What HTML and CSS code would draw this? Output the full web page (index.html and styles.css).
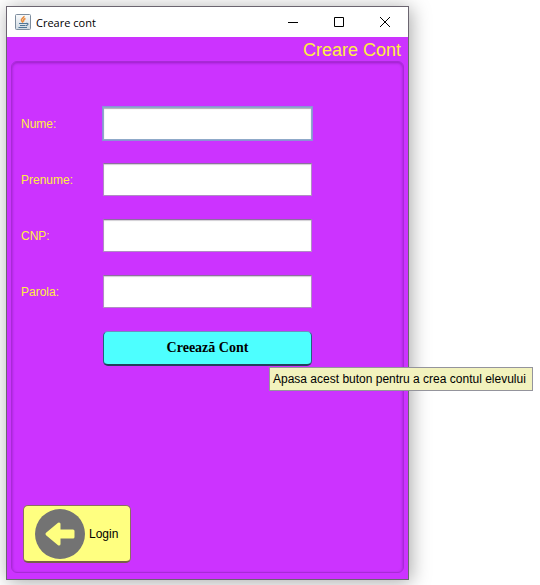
FILE: index.html
```html
<!DOCTYPE html>
<html lang="ro">
<head>
<meta charset="utf-8">
<title>Creare cont</title>
<link rel="stylesheet" href="styles.css">
</head>
<body>
<div class="window">
  <header class="titlebar">
    <svg class="app-icon" viewBox="0 0 16 16" aria-hidden="true">
      <defs>
        <linearGradient id="tile" x1="0" y1="0" x2="0" y2="1">
          <stop offset="0" stop-color="#fafbfc"/>
          <stop offset="1" stop-color="#cfd9e2"/>
        </linearGradient>
      </defs>
      <rect x=".5" y=".5" width="15" height="15" rx="1" fill="url(#tile)" stroke="#7d8d9e"/>
      <path d="M9 2C9.500 4 5.500 4.500 6.500 6.500L8 8.500M10.500 4.500C8.500 5.500 8 6 9 7.500" fill="none" stroke="#e98a3c" stroke-width="1.500"/>
      <path d="M4 9.500h7M5 11.500h5.500M3.500 13.500h8.500M11 9.500c2.800-.6 2.800 1.500 0 2.200" fill="none" stroke="#4f7596" stroke-width="1.100"/>
    </svg>
    <span class="window-name">Creare cont</span>
    <div class="controls">
      <button class="control" type="button" aria-label="Minimizare"><svg viewBox="0 0 10 10"><path d="M0 5.500h10"/></svg></button>
      <button class="control" type="button" aria-label="Maximizare"><svg viewBox="0 0 10 10"><path d="M.5.5h9v9h-9z"/></svg></button>
      <button class="control" type="button" aria-label="Închidere"><svg viewBox="0 0 10 10"><path d="M0 0l10 10M10 0L0 10"/></svg></button>
    </div>
  </header>
  <main class="content">
    <h1 class="heading">Creare Cont</h1>
    <form class="panel">
      <div class="fields">
        <label for="nume">Nume:</label>
        <input class="field focused" id="nume" type="text">
        <label for="prenume">Prenume:</label>
        <input class="field" id="prenume" type="text">
        <label for="cnp">CNP:</label>
        <input class="field" id="cnp" type="text">
        <label for="parola">Parola:</label>
        <input class="field" id="parola" type="password">
        <div class="submit">
          <button class="create" type="button" aria-describedby="tip">Creează Cont</button>
          <div class="tooltip" id="tip" role="tooltip">Apasa acest buton pentru a crea contul elevului</div>
        </div>
      </div>
      <button class="login" type="button">
        <svg class="arrow" viewBox="0 0 50 50" aria-hidden="true">
          <circle cx="25" cy="25" r="25" fill="#737373"/>
          <path d="M12 25L24 15V22H38V28H24V35Z" fill="#ffff80" stroke="#ffff80" stroke-width="3" stroke-linejoin="round"/>
        </svg>
        Login
      </button>
    </form>
  </main>
</div>
</body>
</html>
```
FILE: styles.css
```css
* {
  box-sizing: border-box;
}

body {
  display: flex;
  min-height: 100vh;
  margin: 0;
  padding: 6px 131px 5px 6px;
  overflow: hidden;
  background: #fff;
  font-family: "Liberation Sans", Arial, sans-serif;
  font-size: 12px;
}

.window {
  display: flex;
  flex: 1;
  flex-direction: column;
  border: 1px solid #6b6570;
  background: #cc33ff;
  box-shadow: 2px 2px 18px rgba(0, 0, 0, 0.35);
}

.titlebar {
  display: flex;
  align-items: center;
  height: 30px;
  padding-left: 8px;
  background: #fff;
}

.app-icon {
  width: 16px;
  height: 16px;
}

.window-name {
  margin-left: 5px;
  font-family: "Open Sans", "Noto Sans", sans-serif;
  font-size: 11px;
  color: #000;
}

.controls {
  display: flex;
  height: 100%;
  margin-left: auto;
}

.control {
  display: flex;
  align-items: center;
  justify-content: center;
  width: 46px;
  padding: 0;
  border: 0;
  background: none;
}

.control svg {
  width: 10px;
  height: 10px;
  overflow: visible;
  fill: none;
  stroke: #000;
}

.content {
  display: flex;
  flex: 1;
  flex-direction: column;
  padding: 0 4px 6px;
}

.heading {
  margin: 0;
  padding: 2px 3px 0;
  font-size: 18px;
  font-weight: 400;
  line-height: 22px;
  text-align: right;
  color: #fff040;
}

.panel {
  display: flex;
  flex: 1;
  flex-direction: column;
  align-items: flex-start;
  justify-content: space-between;
  padding: 45px 8px 9px;
  border: 1px solid #a82ad6;
  border-radius: 6px;
  box-shadow: inset 0 1px 3px rgba(70, 0, 100, 0.4);
}

.fields {
  display: grid;
  grid-template-columns: 82px 209px;
  row-gap: 23px;
  align-items: center;
  padding-left: 1px;
  color: #fff040;
}

.field {
  width: 100%;
  height: 33px;
  padding: 0 6px;
  border: 1px solid #b08cc4;
  border-top-color: #8d6ea0;
  border-radius: 0;
  outline: none;
  background: #fff;
  box-shadow: inset 0 1px 1px #d2cfd4;
  font: inherit;
}

.focused {
  border-color: #8fa9c9;
  box-shadow: 0 0 0 1px #8c8fd8, inset 0 1px 1px #b0b0b8;
}

.submit {
  position: relative;
  grid-column: 2;
}

.create {
  display: block;
  width: 100%;
  height: 35px;
  border: 1px solid #24607c;
  border-top-color: #6e8fc0;
  border-bottom: 2px solid #24405c;
  border-radius: 5px;
  background: #4dffff;
  font-family: "Liberation Serif", "Times New Roman", serif;
  font-size: 14px;
  font-weight: 700;
  color: #000;
}

.tooltip {
  position: absolute;
  top: 36px;
  left: 166px;
  padding: 0 6px 0 3px;
  border: 1px solid #94949c;
  background: #f2f2bd;
  line-height: 22px;
  white-space: nowrap;
  color: #000;
}

.login {
  display: flex;
  align-items: center;
  gap: 4px;
  height: 58px;
  margin-left: 3px;
  padding: 0 12px 0 11px;
  border: 1px solid #8a7060;
  border-bottom: 2px solid #77604a;
  border-radius: 5px;
  background: #ffff80;
  font: inherit;
  color: #000;
}

.arrow {
  width: 50px;
  height: 50px;
}
```
